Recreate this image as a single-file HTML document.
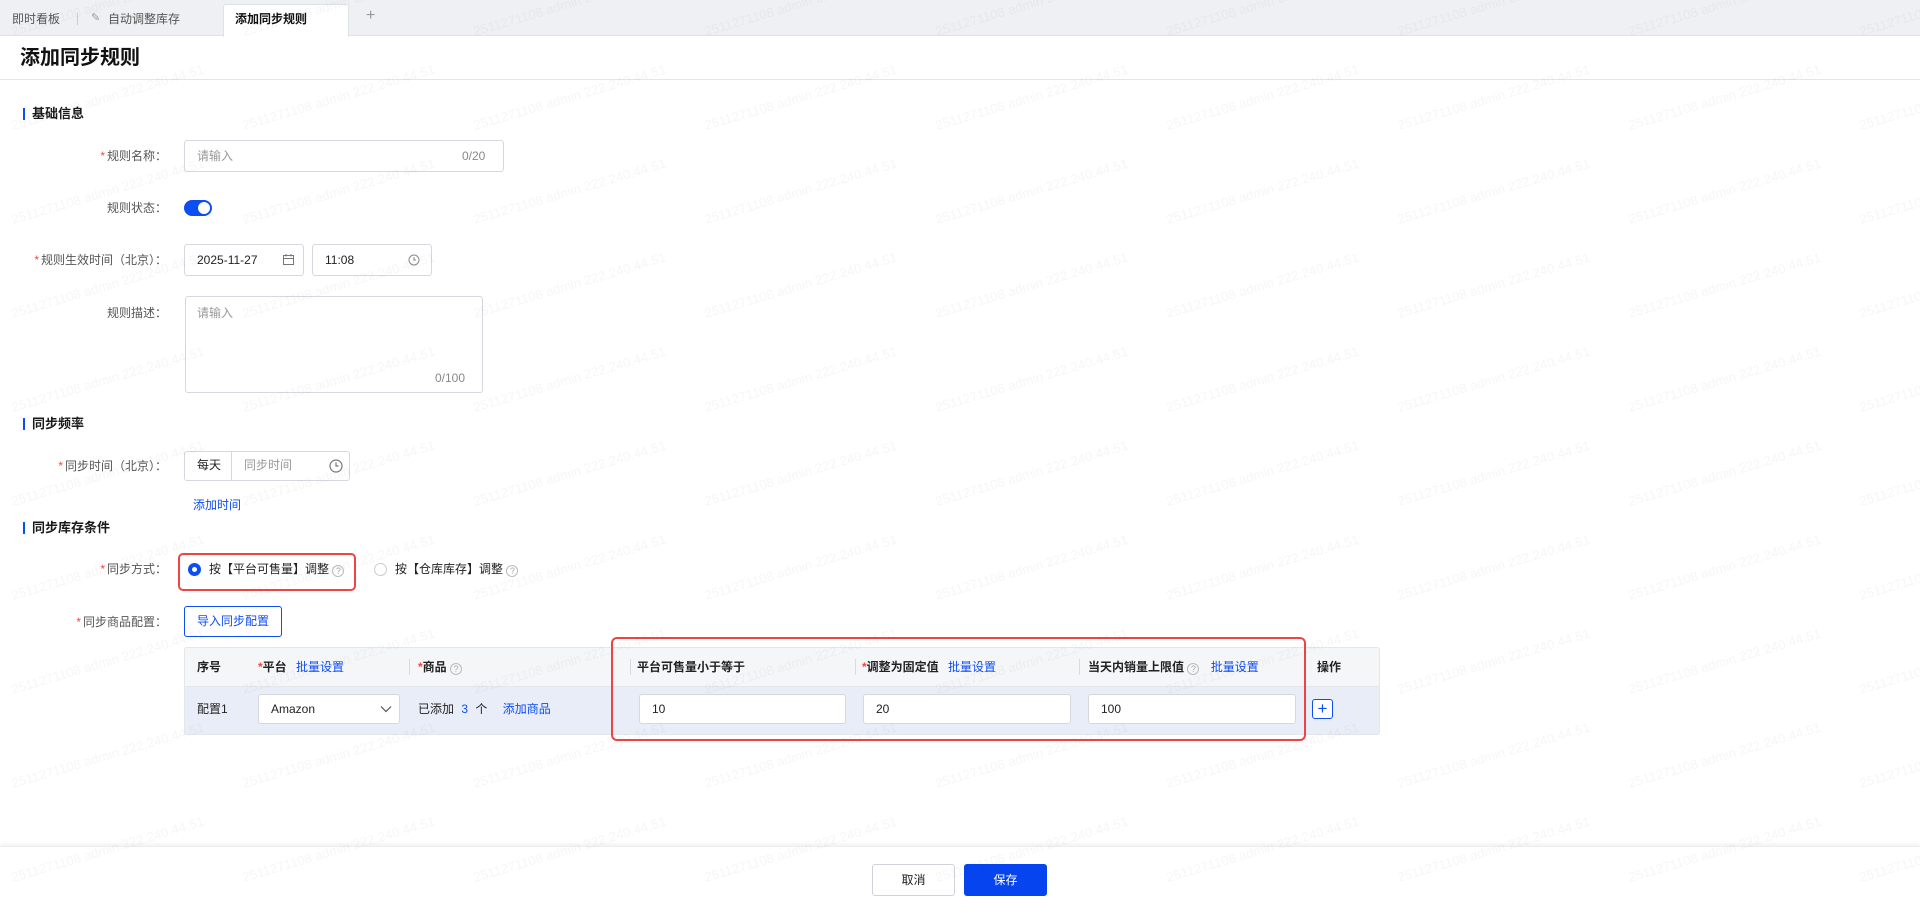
<!DOCTYPE html>
<html><head><meta charset="utf-8"><style>
*{box-sizing:border-box;margin:0;padding:0}
body{width:1920px;height:912px;position:relative;overflow:hidden;background:#fff;font-family:"Liberation Sans","Noto Sans CJK SC",sans-serif;font-size:12px;line-height:16px;color:#333}
.a{position:absolute}
.lbl{position:absolute;right:1753px;color:#555;font-size:12px;white-space:nowrap;line-height:16px}
.lbl i{color:#f5483b;font-style:normal;margin-right:2px}
.inp{position:absolute;border:1px solid #d5d8de;border-radius:3px;background:#fff}
.sec{position:absolute;left:23px;font-weight:bold;font-size:13px;color:#1a1a1a;padding-left:9px;line-height:14px}
.sec:before{content:"";position:absolute;left:0;top:1px;width:2px;height:12px;background:#0d4ef2}
.blue{color:#0d4ef2}
.th{position:absolute;top:659px;font-weight:bold;color:#222;line-height:16px;white-space:nowrap}
.th i{color:#f5483b;font-style:normal}
.dv{position:absolute;top:659px;width:1px;height:16px;background:#d8dbe0}
.q{display:inline-block;width:12px;height:12px;border:1px solid #bbb;border-radius:50%;font-size:9px;line-height:10px;text-align:center;color:#aaa;font-weight:normal;vertical-align:-1px}
.cell{position:absolute;top:694px;height:30px;border:1px solid #d5d8de;border-radius:3px;background:#fff;padding-left:12px;line-height:28px;font-size:12px;color:#222}
</style></head><body>
<svg class="a" style="left:0;top:0" width="1920" height="912">
<defs><pattern id="wm" x="0" y="-50" width="231" height="94" patternUnits="userSpaceOnUse">
<text x="13" y="86" transform="rotate(-16.5 13 86)" font-family="Liberation Sans,sans-serif" font-size="13" textLength="200" lengthAdjust="spacingAndGlyphs" fill="#000" fill-opacity="0.035">2511271108 admin 222.240.44.51</text>
</pattern></defs>
</svg>
<!-- tab bar -->
<div class="a" style="left:0;top:0;width:1920px;height:36px;background:#eef0f3;border-bottom:1px solid #dfe2e6"></div>
<div class="a" style="left:12px;top:11px;color:#555;font-size:12px">即时看板</div>
<div class="a" style="left:77px;top:13px;width:1px;height:12px;background:#ccc"></div>
<div class="a" style="left:91px;top:10px;color:#999;font-size:11px">✎</div>
<div class="a" style="left:108px;top:11px;color:#555;font-size:12px">自动调整库存</div>
<div class="a" style="left:223px;top:4px;width:126px;height:33px;background:#fff;border:1px solid #dfe2e6;border-bottom:none;border-radius:3px 3px 0 0"></div>
<div class="a" style="left:235px;top:11px;color:#111;font-size:12px;font-weight:bold">添加同步规则</div>
<div class="a" style="left:366px;top:8px;color:#999;font-size:16px">+</div>
<!-- title -->
<div class="a" style="left:20px;top:46px;font-size:20px;line-height:24px;font-weight:bold;color:#111">添加同步规则</div>
<div class="a" style="left:0;top:79px;width:1920px;height:1px;background:#e3e5e8"></div>

<div class="sec" style="top:107px">基础信息</div>
<div class="lbl" style="top:148px"><i>*</i>规则名称：</div>
<div class="inp" style="left:184px;top:140px;width:320px;height:32px"></div>
<div class="a" style="left:197px;top:148px;color:#999">请输入</div>
<div class="a" style="left:462px;top:148px;color:#888">0/20</div>

<div class="lbl" style="top:200px">规则状态：</div>
<div class="a" style="left:184px;top:200px;width:28px;height:16px;border-radius:8px;background:#0d4ef2"></div>
<div class="a" style="left:198px;top:202px;width:12px;height:12px;border-radius:50%;background:#fff"></div>

<div class="lbl" style="top:252px"><i>*</i>规则生效时间（北京）：</div>
<div class="inp" style="left:184px;top:244px;width:120px;height:32px"></div>
<div class="a" style="left:197px;top:252px;color:#222">2025-11-27</div>
<svg class="a" style="left:282px;top:253px" width="13" height="13"><rect x="1.5" y="2.5" width="10" height="9" fill="none" stroke="#777"/><line x1="1.5" y1="5.5" x2="11.5" y2="5.5" stroke="#777"/><line x1="4" y1="1" x2="4" y2="3.5" stroke="#777"/><line x1="9" y1="1" x2="9" y2="3.5" stroke="#777"/></svg>
<div class="inp" style="left:312px;top:244px;width:120px;height:32px"></div>
<div class="a" style="left:325px;top:252px;color:#222">11:08</div>
<svg class="a" style="left:408px;top:254px" width="12" height="12"><circle cx="6" cy="6" r="5" fill="none" stroke="#888"/><path d="M6 3v3h2" fill="none" stroke="#888"/></svg>

<div class="lbl" style="top:305px">规则描述：</div>
<div class="inp" style="left:185px;top:296px;width:298px;height:97px"></div>
<div class="a" style="left:197px;top:305px;color:#999">请输入</div>
<div class="a" style="left:435px;top:370px;color:#888">0/100</div>

<div class="sec" style="top:417px">同步频率</div>
<div class="lbl" style="top:458px"><i>*</i>同步时间（北京）：</div>
<div class="inp" style="left:184px;top:451px;width:166px;height:30px"></div>
<div class="a" style="left:231px;top:452px;width:1px;height:28px;background:#d5d8de"></div>
<div class="a" style="left:197px;top:457px;color:#222">每天</div>
<div class="a" style="left:244px;top:457px;color:#999">同步时间</div>
<svg class="a" style="left:329px;top:459px" width="14" height="14"><circle cx="7" cy="7" r="6" fill="none" stroke="#777" stroke-width="1.2"/><path d="M7 3.5v3.5h2.5" fill="none" stroke="#777" stroke-width="1.2"/></svg>
<div class="a blue" style="left:193px;top:497px">添加时间</div>

<div class="sec" style="top:521px">同步库存条件</div>
<div class="lbl" style="top:561px"><i>*</i>同步方式：</div>
<div class="a" style="left:178px;top:553px;width:178px;height:38px;border:2px solid #ef4444;border-radius:5px"></div>
<div class="a" style="left:188px;top:563px;width:13px;height:13px;border-radius:50%;border:4px solid #0d4ef2;background:#fff"></div>
<div class="a" style="left:209px;top:561px;color:#222">按【平台可售量】调整 <span class="q">?</span></div>
<div class="a" style="left:374px;top:563px;width:13px;height:13px;border-radius:50%;border:1px solid #ccc;background:#fff"></div>
<div class="a" style="left:395px;top:561px;color:#222">按【仓库库存】调整 <span class="q">?</span></div>

<div class="lbl" style="top:614px"><i>*</i>同步商品配置：</div>
<div class="a" style="left:184px;top:606px;width:98px;height:31px;border:1px solid #0d4ef2;border-radius:3px;color:#0d4ef2;text-align:center;line-height:29px">导入同步配置</div>

<!-- table -->
<div class="a" style="left:184px;top:647px;width:1196px;height:88px;border:1px solid #e3e6ea;border-radius:3px;background:#e9edf8;overflow:hidden"><div style="height:39px;background:#f5f6f8;border-bottom:1px solid #e3e6ea"></div></div>
<div class="th" style="left:197px">序号</div>
<div class="th" style="left:258px"><i>*</i>平台 <span class="blue" style="font-weight:normal;margin-left:6px">批量设置</span></div>
<div class="dv" style="left:409px"></div>
<div class="th" style="left:418px"><i>*</i>商品 <span class="q">?</span></div>
<div class="dv" style="left:630px"></div>
<div class="th" style="left:637px">平台可售量小于等于</div>
<div class="dv" style="left:855px"></div>
<div class="th" style="left:862px"><i>*</i>调整为固定值 <span class="blue" style="font-weight:normal;margin-left:6px">批量设置</span></div>
<div class="dv" style="left:1079px"></div>
<div class="th" style="left:1088px">当天内销量上限值 <span class="q">?</span> <span class="blue" style="font-weight:normal;margin-left:8px">批量设置</span></div>
<div class="th" style="left:1317px">操作</div>

<div class="a" style="left:197px;top:701px;color:#222">配置1</div>
<div class="cell" style="left:258px;width:142px">Amazon</div>
<svg class="a" style="left:380px;top:705px" width="12" height="8"><path d="M1 1.5l5 5 5-5" fill="none" stroke="#555" stroke-width="1.2"/></svg>
<div class="a" style="left:418px;top:701px;color:#222">已添加 <span class="blue" style="margin:0 4px">3</span> 个 <span class="blue" style="margin-left:12px">添加商品</span></div>
<div class="cell" style="left:639px;width:207px">10</div>
<div class="cell" style="left:863px;width:208px">20</div>
<div class="cell" style="left:1088px;width:208px">100</div>
<div class="a" style="left:1312px;top:699px;width:21px;height:20px;border:1px solid #0d4ef2;border-radius:3px;background:#fff;color:#0d4ef2;text-align:center;line-height:17px;font-size:17px">+</div>
<div class="a" style="left:611px;top:637px;width:695px;height:104px;border:2px solid #ef4444;border-radius:6px"></div>

<!-- footer -->
<div class="a" style="left:0;top:846px;width:1920px;height:66px;background:#fff;box-shadow:0 -2px 4px rgba(0,0,0,0.06);border-top:1px solid #eceef1"></div>
<div class="a" style="left:872px;top:864px;width:83px;height:32px;border:1px solid #cfd2d8;border-radius:3px;text-align:center;line-height:30px;color:#222">取消</div>
<div class="a" style="left:964px;top:864px;width:83px;height:32px;background:#0644f0;border-radius:3px;text-align:center;line-height:32px;color:#fff">保存</div>

<svg class="a" style="left:0;top:0;pointer-events:none" width="1920" height="912"><rect width="1920" height="912" fill="url(#wm)"/></svg>
</body></html>
